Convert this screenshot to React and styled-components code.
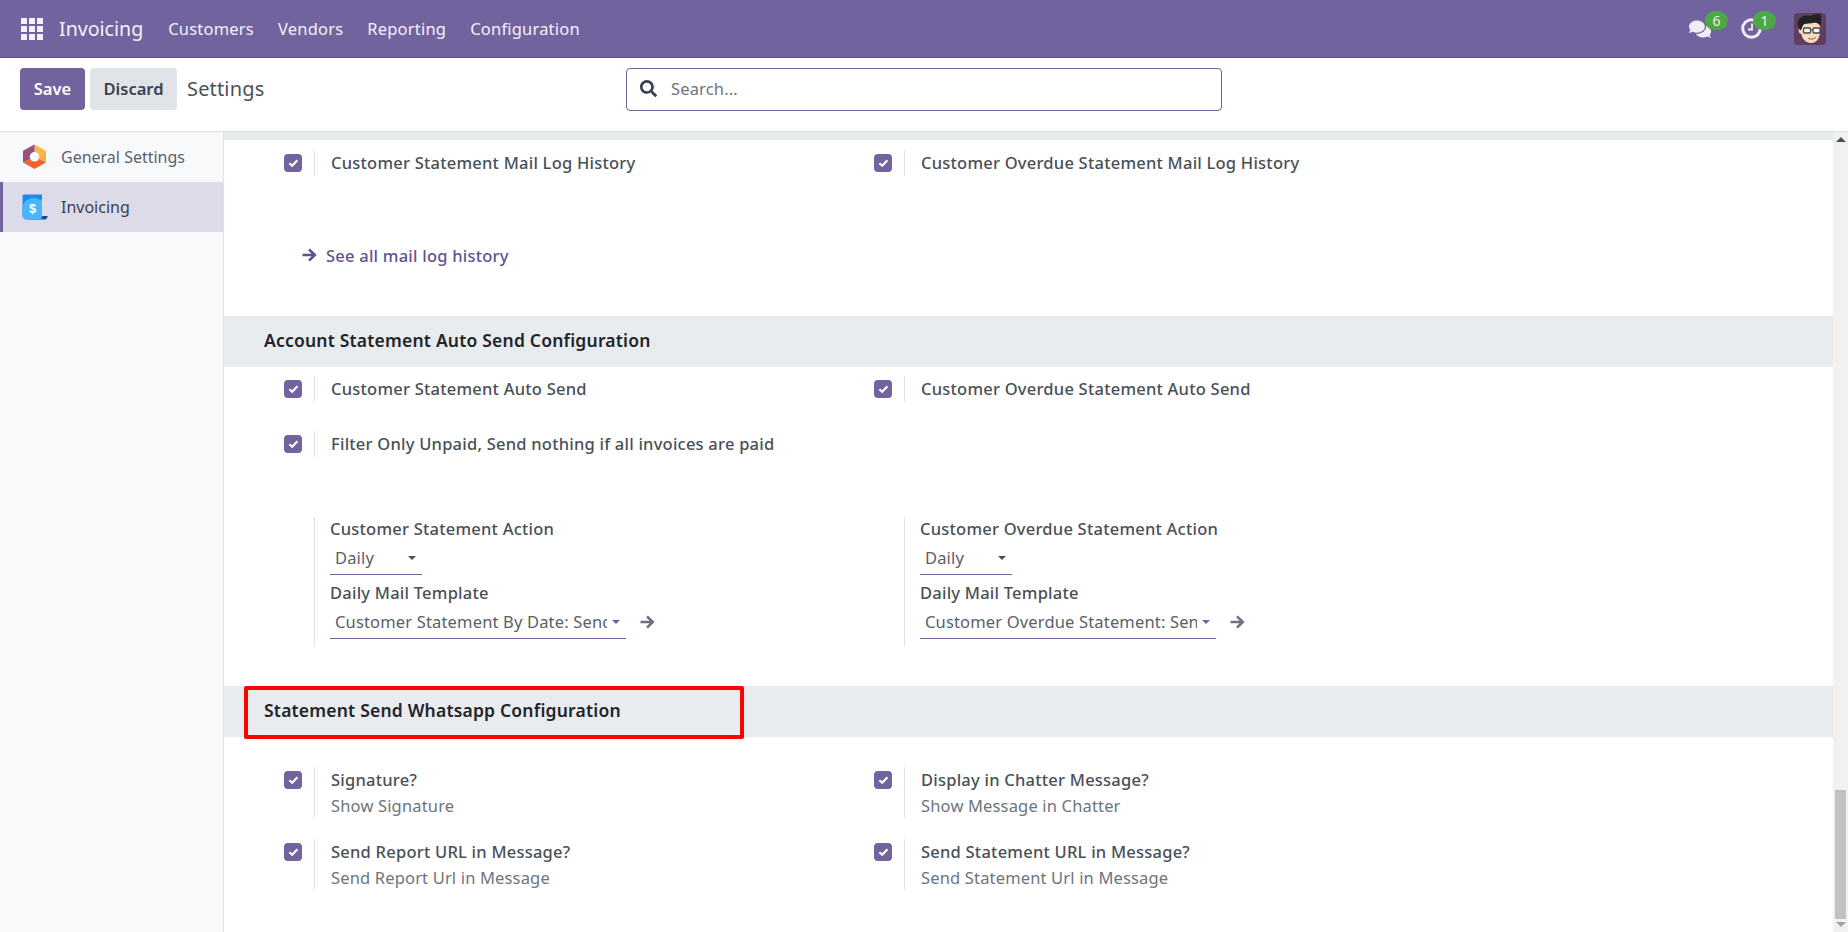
import React from 'react';
import styled, { createGlobalStyle } from 'styled-components';
import { FaComments, FaSearch } from 'react-icons/fa';

const Global = createGlobalStyle`
  html, body {
    margin: 0;
    height: 100%;
    overflow: hidden;
  }

  body {
    font-family: "Noto Sans", "Open Sans", sans-serif;
    font-size: 16.5px;
    letter-spacing: 0.16px;
    color: #495057;
    background: #ffffff;
  }
`;

const Page = styled.div`
  display: flex;
  flex-direction: column;
  width: 1848px;
  height: 932px;
  overflow: hidden;
`;

const Navbar = styled.header`
  display: flex;
  align-items: center;
  flex: 0 0 58px;
  box-sizing: border-box;
  padding: 0 22px 0 21px;
  background: #71639e;
  border-bottom: 1px solid #5f5286;
  color: #f4f2f8;
`;

const AppsIcon = styled.svg`
  width: 22px;
  height: 22px;
  margin-right: 16px;
  fill: #f5f3f9;
`;

const Brand = styled.span`
  font-size: 19.6px;
  letter-spacing: 0;
  margin-right: 25px;
`;

const NavLink = styled.span`
  font-size: 16.5px;
  letter-spacing: 0.2px;
  margin-right: 24px;
`;

const NavRight = styled.div`
  display: flex;
  align-items: center;
  margin-left: auto;
`;

const Systray = styled.div`
  position: relative;
  display: flex;
  align-items: center;
  margin-right: ${(p) => p.$gap}px;
  color: #f0edf7;
  font-size: 22px;
`;

const Badge = styled.span`
  position: absolute;
  top: -7px;
  left: ${(p) => p.$left}px;
  width: 23px;
  height: 19px;
  border-radius: 10px;
  background: #4ea646;
  color: #eaf5e6;
  font-size: 14px;
  letter-spacing: 0;
  line-height: 19px;
  text-align: center;
`;

const Avatar = styled.svg`
  width: 32px;
  height: 32px;
  border-radius: 4px;
`;

const ControlPanel = styled.div`
  display: flex;
  align-items: center;
  flex: 0 0 74px;
  box-sizing: border-box;
  padding: 0 0 11px 20px;
  background: #ffffff;
  border-bottom: 1px solid #dee2e6;
`;

const Button = styled.button`
  height: 42px;
  box-sizing: border-box;
  margin-right: ${(p) => p.$gap}px;
  padding: 0 0 2px;
  width: ${(p) => p.$width}px;
  border: 0;
  border-radius: 4px;
  background: ${(p) => (p.$primary ? '#71639e' : '#e0e3e7')};
  color: ${(p) => (p.$primary ? '#ffffff' : '#374151')};
  font-family: inherit;
  font-size: 16.5px;
  font-weight: 600;
`;

const PanelTitle = styled.span`
  flex: 0 0 439px;
  margin-left: 10px;
  padding-bottom: 2px;
  font-size: 20px;
  color: #4b5058;
`;

const SearchBox = styled.div`
  display: flex;
  align-items: center;
  width: 596px;
  height: 43px;
  box-sizing: border-box;
  padding: 0 0 2px 13px;
  border: 1px solid #71639e;
  border-radius: 4px;
  color: #374151;
  font-size: 17px;
`;

const SearchText = styled.span`
  margin-left: 14px;
  color: #6c757d;
  font-size: 16.5px;
`;

const Body = styled.div`
  display: flex;
  flex: 1;
  min-height: 0;
`;

const Sidebar = styled.nav`
  flex: 0 0 224px;
  box-sizing: border-box;
  background: #f8f9fa;
  border-right: 1px solid #dee2e6;
`;

const SideItem = styled.div`
  display: flex;
  align-items: center;
  height: 50px;
  box-sizing: border-box;
  padding-left: ${(p) => (p.$active ? '19px' : '22px')};
  border-left: ${(p) => (p.$active ? '3px solid #71639e' : '0')};
  background: ${(p) => (p.$active ? '#dddbe8' : 'transparent')};
  color: ${(p) => (p.$active ? '#374151' : '#5a6270')};
  font-size: 16px;
  letter-spacing: 0;
`;

const SideIcon = styled.svg`
  width: 26px;
  height: 26px;
  margin-right: 13px;
`;

const Main = styled.main`
  flex: 1;
  min-width: 0;
  overflow: hidden;
`;

const TopStrip = styled.div`
  height: 8px;
  background: #e9ecef;
`;

const SectionHead = styled.h2`
  display: flex;
  align-items: center;
  height: 51px;
  box-sizing: border-box;
  margin: 0;
  padding: 0 0 3px 40px;
  background: #e9ecef;
  color: #212529;
  font-size: 17.5px;
  letter-spacing: 0.2px;
  font-weight: 600;
`;

const Flagged = styled.div`
  position: relative;
`;

const RedBox = styled.div`
  position: absolute;
  left: 20px;
  top: 0;
  width: 500px;
  height: 53px;
  box-sizing: border-box;
  border: 4px solid #ff0000;
  border-radius: 2px;
`;

const SettingsGrid = styled.div`
  display: grid;
  grid-template-columns: 590px 590px;
  row-gap: ${(p) => p.$rowGap}px;
  padding: ${(p) => p.$top}px 0 ${(p) => p.$bottom}px 60px;
`;

const Setting = styled.div`
  display: flex;
  grid-column: ${(p) => (p.$wide ? '1 / span 2' : 'auto')};
`;

const CheckCell = styled.div`
  flex: 0 0 30px;
  display: flex;
  padding-top: 4px;
  box-sizing: border-box;
`;

const Check = styled.span`
  display: flex;
  align-items: center;
  justify-content: center;
  width: 18px;
  height: 18px;
  border-radius: 4px;
  background: #71639e;
`;

const Content = styled.div`
  min-height: 26px;
  padding-left: 16px;
  border-left: 1px solid #dee2e6;
`;

const Label = styled.div`
  color: #495057;
  font-weight: 500;
  letter-spacing: 0.23px;
  line-height: 26px;
`;

const Sub = styled.div`
  color: #6c757d;
  line-height: 25px;
`;

const SeeAll = styled.a`
  display: flex;
  align-items: center;
  gap: 9px;
  margin: 66px 0 48px 78px;
  height: 26px;
  color: #5f5290;
  font-weight: 500;
  letter-spacing: 0.23px;
`;

const FieldRow = styled.div`
  display: grid;
  grid-template-columns: 590px 590px;
  padding: 0 0 40px 90px;
`;

const FieldCell = styled.div`
  height: 129px;
  box-sizing: border-box;
  padding: 0 0 0 15px;
  border-left: 1px solid #dee2e6;
`;

const FieldLabel = styled.div`
  color: #495057;
  font-weight: 500;
  letter-spacing: 0.23px;
  line-height: 24px;
`;

const FieldLine = styled.div`
  display: flex;
  align-items: center;
  gap: 14px;
  margin-bottom: 6px;
`;

const Select = styled.div`
  display: flex;
  align-items: center;
  width: ${(p) => p.$width}px;
  height: 34px;
  box-sizing: border-box;
  padding: 0 6px 0 5px;
  border-bottom: 1px solid #71639e;
  color: #5a6068;
`;

const SelectText = styled.span`
  flex: 1;
  overflow: hidden;
  white-space: nowrap;
`;

const Caret = styled.span`
  width: 0;
  height: 0;
  margin-left: 5px;
  border-left: 4px solid transparent;
  border-right: 4px solid transparent;
  border-top: 4px solid ${(p) => p.$color};
`;

const GoTo = styled.span`
  display: flex;
  color: #6b7280;
`;

const Scrollbar = styled.div`
  display: flex;
  flex-direction: column;
  align-items: center;
  flex: 0 0 15px;
  box-sizing: border-box;
  padding-top: 5px;
  background: #f1f1f1;
`;

const ScrollTrack = styled.div`
  flex: 1;
  width: 100%;
  display: flex;
  justify-content: center;
  align-items: flex-end;
  padding-bottom: 3px;
  box-sizing: border-box;
`;

const ScrollThumb = styled.div`
  width: 11px;
  height: 129px;
  background: #c1c1c1;
`;

const ScrollArrow = styled.span`
  width: 0;
  height: 0;
  border-left: 5px solid transparent;
  border-right: 5px solid transparent;
  ${(p) => (p.$up ? 'border-bottom: 5px solid #505050;' : 'border-top: 5px solid #a3a3a3; margin-bottom: 5px;')}
`;

const Arrow = () => (
  <svg width="15" height="14" viewBox="0 0 15 14" fill="none" stroke="currentColor" strokeWidth="2.6">
    <path d="M0.5 7 H13 M7 1.4 L12.8 7 L7 12.6" />
  </svg>
);

const ClockIcon = () => (
  <svg width="21" height="21" viewBox="0 0 21 21" fill="none" stroke="currentColor">
    <circle cx="10.5" cy="10.5" r="8.8" strokeWidth="3" />
    <path d="M11 5.5 V11.5 H7" strokeWidth="1.8" />
  </svg>
);

const Tick = () => (
  <Check>
    <svg width="11" height="10" viewBox="0 0 11 10">
      <path d="M1.4 5.2 L4.2 7.8 L9.4 2.2" fill="none" stroke="#fff" strokeWidth="2.1" />
    </svg>
  </Check>
);

const Item = ({ label, sub, wide }) => (
  <Setting $wide={wide}>
    <CheckCell><Tick /></CheckCell>
    <Content>
      <Label>{label}</Label>
      {sub && <Sub>{sub}</Sub>}
    </Content>
  </Setting>
);

const Field = ({ label, template }) => (
  <FieldCell>
    <FieldLabel>{label}</FieldLabel>
    <FieldLine>
      <Select $width={92}>
        <SelectText>Daily</SelectText>
        <Caret $color="#495057" />
      </Select>
    </FieldLine>
    <FieldLabel>Daily Mail Template</FieldLabel>
    <FieldLine>
      <Select $width={296}>
        <SelectText>{template}</SelectText>
        <Caret $color="#71639e" />
      </Select>
      <GoTo><Arrow /></GoTo>
    </FieldLine>
  </FieldCell>
);

export default function App() {
  return (
    <Page>
      <Global />
      <Navbar>
        <AppsIcon viewBox="0 0 22 22">
          <rect x="0" y="0" width="6" height="6" />
          <rect x="8" y="0" width="6" height="6" />
          <rect x="16" y="0" width="6" height="6" />
          <rect x="0" y="8" width="6" height="6" />
          <rect x="8" y="8" width="6" height="6" />
          <rect x="16" y="8" width="6" height="6" />
          <rect x="0" y="16" width="6" height="6" />
          <rect x="8" y="16" width="6" height="6" />
          <rect x="16" y="16" width="6" height="6" />
        </AppsIcon>
        <Brand>Invoicing</Brand>
        <NavLink>Customers</NavLink>
        <NavLink>Vendors</NavLink>
        <NavLink>Reporting</NavLink>
        <NavLink>Configuration</NavLink>
        <NavRight>
          <Systray $gap={30}>
            <FaComments />
            <Badge $left={16}>6</Badge>
          </Systray>
          <Systray $gap={32}>
            <ClockIcon />
            <Badge $left={12}>1</Badge>
          </Systray>
          <Avatar viewBox="0 0 32 32">
            <rect width="32" height="32" fill="#5f3f5c" />
            <path d="M6 15 C4 15 4 20 7 21 L8 18Z" fill="#f2cfae" />
            <path d="M7 14 C6 23 10 30 17 30 C24 30 27 23 26 12 C20 7 12 8 7 14Z" fill="#f7dcc0" />
            <path d="M4 13 C2 6 9 1 16 3 C20 1 24 1 27 0.500 C25 2 27 3 28 3 C26 5 28 9 26 13 C25 10 22 9 19 10 C15 11 10 10 9 12 C8 14 8 16 7 17 C5 17 5 15 4 13Z" fill="#232326" />
            <rect x="9.500" y="15" width="7" height="5" rx="1" fill="#fdf6ee" stroke="#45454a" strokeWidth="1.3" />
            <rect x="19" y="15" width="7" height="5" rx="1" fill="#fdf6ee" stroke="#45454a" strokeWidth="1.3" />
            <path d="M16.500 17 H19" stroke="#45454a" strokeWidth="1" />
            <path d="M14 25.500 Q18 27.500 22 24.500" fill="none" stroke="#a5604f" strokeWidth="1" />
          </Avatar>
        </NavRight>
      </Navbar>
      <ControlPanel>
        <Button $primary $width={65} $gap={5}>Save</Button>
        <Button $width={87} $gap={0}>Discard</Button>
        <PanelTitle>Settings</PanelTitle>
        <SearchBox>
          <FaSearch />
          <SearchText>Search...</SearchText>
        </SearchBox>
      </ControlPanel>
      <Body>
        <Sidebar>
          <SideItem>
            <SideIcon viewBox="0 0 26 26">
              <path d="M12.500 0.500 L24 6.800 L12.500 12.800Z" fill="#fbb945" />
              <path d="M24 6.800 V18.500 L12.500 12.800Z" fill="#f9b03f" />
              <path d="M24 18.500 L12.500 25 L1 18.500 L12.500 12.800Z" fill="#f0622f" />
              <path d="M1 18.500 V6.800 L12.500 0.500 V12.800Z" fill="#96507f" />
              <circle cx="12.500" cy="12.800" r="4.800" fill="#f8f9fa" />
            </SideIcon>
            General Settings
          </SideItem>
          <SideItem $active>
            <SideIcon viewBox="0 0 26 26">
              <path d="M8 22 H26 L24 25.500 H8Z" fill="#1c4a9c" />
              <path d="M2 0.500 H20 V22 Q20 25.500 17 25.500 H5 Q0.500 25.500 0.500 21 V2 Q0.500 0.500 2 0.500Z" fill="#1e88f0" />
              <path d="M0.500 12 A12 12 0 0 1 20 7 V22 Q20 25.500 17 25.500 H5 Q0.500 25.500 0.500 21Z" fill="#4ab4fc" />
              <text x="10.500" y="18.500" fontSize="13" fontWeight="700" fill="#fff" textAnchor="middle" fontFamily="Liberation Sans">$</text>
            </SideIcon>
            Invoicing
          </SideItem>
        </Sidebar>
        <Main>
          <TopStrip />
          <SettingsGrid $top={10} $bottom={0} $rowGap={0}>
            <Item label="Customer Statement Mail Log History" />
            <Item label="Customer Overdue Statement Mail Log History" />
          </SettingsGrid>
          <SeeAll><Arrow />See all mail log history</SeeAll>
          <SectionHead>Account Statement Auto Send Configuration</SectionHead>
          <SettingsGrid $top={9} $bottom={60} $rowGap={29}>
            <Item label="Customer Statement Auto Send" />
            <Item label="Customer Overdue Statement Auto Send" />
            <Item wide label="Filter Only Unpaid, Send nothing if all invoices are paid" />
          </SettingsGrid>
          <FieldRow>
            <Field label="Customer Statement Action" template="Customer Statement By Date: Send by email" />
            <Field label="Customer Overdue Statement Action" template="Customer Overdue Statement: Send by email" />
          </FieldRow>
          <Flagged>
            <SectionHead>Statement Send Whatsapp Configuration</SectionHead>
            <RedBox />
          </Flagged>
          <SettingsGrid $top={30} $bottom={0} $rowGap={21}>
            <Item label="Signature?" sub="Show Signature" />
            <Item label="Display in Chatter Message?" sub="Show Message in Chatter" />
            <Item label="Send Report URL in Message?" sub="Send Report Url in Message" />
            <Item label="Send Statement URL in Message?" sub="Send Statement Url in Message" />
          </SettingsGrid>
        </Main>
        <Scrollbar>
          <ScrollArrow $up />
          <ScrollTrack><ScrollThumb /></ScrollTrack>
          <ScrollArrow />
        </Scrollbar>
      </Body>
    </Page>
  );
}
